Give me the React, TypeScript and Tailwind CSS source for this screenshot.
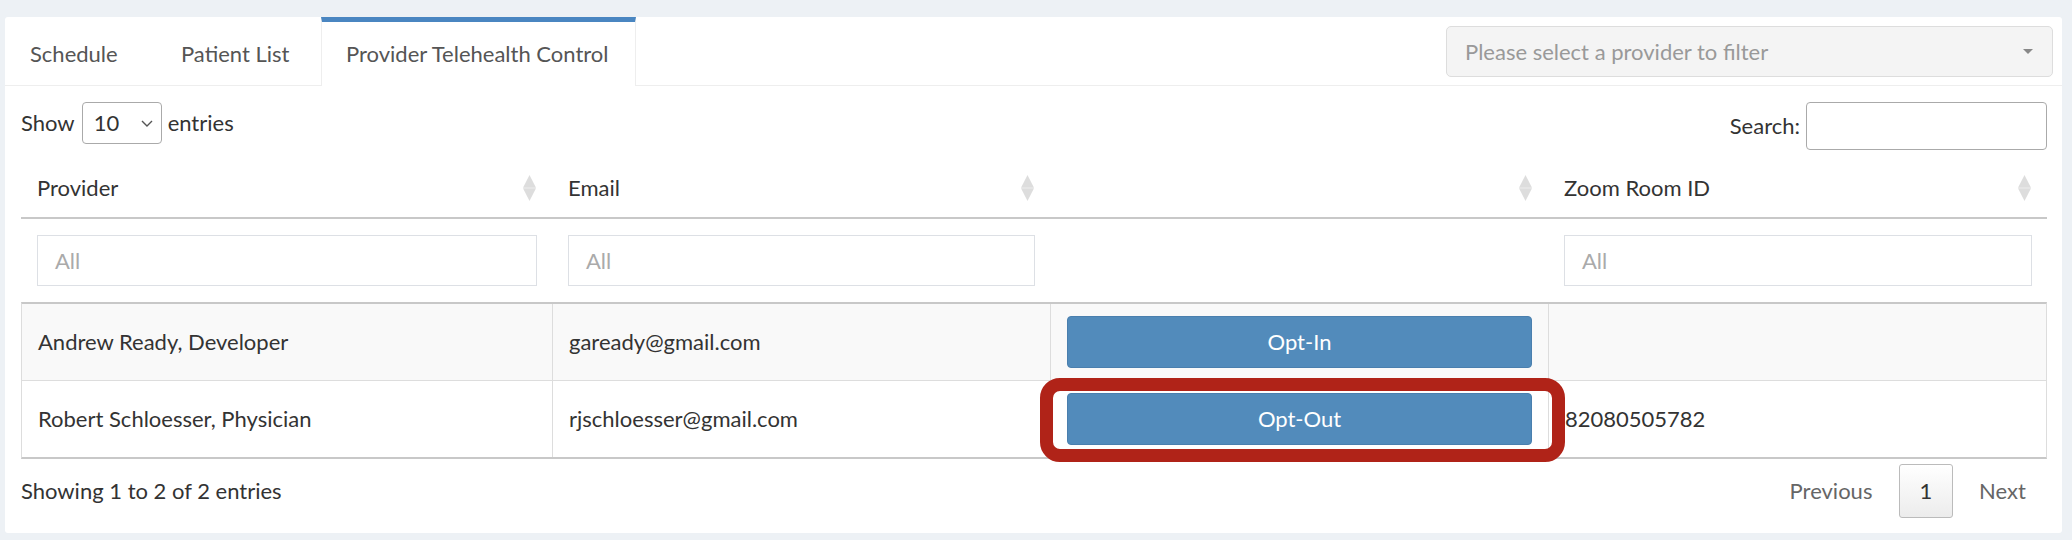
import React from "react";

const providers = [
  { name: "Andrew Ready, Developer", email: "gaready@gmail.com", action: "Opt-In", room: "" },
  { name: "Robert Schloesser, Physician", email: "rjschloesser@gmail.com", action: "Opt-Out", room: "82080505782" },
];

function SortIcon() {
  return (
    <svg width="13" height="26" viewBox="0 0 13 26" className="shrink-0">
      <path d="M6.5 0 L13 12.7 L0 12.7 Z" fill="#dddddd" />
      <path d="M0 13.3 L13 13.3 L6.5 26 Z" fill="#dddddd" />
    </svg>
  );
}

function FilterInput() {
  return (
    <div className="ml-4 mr-[15px] flex h-[51px] items-center border border-[#dde0e5] bg-white pl-[17px] text-[#aaaaaa]">
      All
    </div>
  );
}

export default function App() {
  return (
    <div className="h-[540px] w-[2072px] bg-[#edf1f5] pb-[7px] pl-[5px] pr-[10px] pt-[17px] font-['Lato','Liberation_Sans',sans-serif] text-[22px] leading-none text-[#333333]">
      <div className="flex h-[516px] flex-col rounded-[3px] bg-white">
        {/* Tabs */}
        <div className="flex h-[69px] items-stretch justify-between border-b border-[#eeeeee]">
          <div className="flex items-stretch text-[#555555]">
            <div className="flex w-[152px] items-center border-t-[5px] border-transparent pl-[25px]">Schedule</div>
            <div className="flex w-[164px] items-center border-t-[5px] border-transparent pl-[24px]">Patient List</div>
            <div className="-mb-px flex w-[315px] items-center border-x border-t-[5px] border-x-[#eeeeee] border-t-[#4a86c1] bg-white pl-[24px]">
              Provider Telehealth Control
            </div>
          </div>
          <div className="mr-[9px] mt-[9px] flex h-[51px] w-[607px] items-center justify-between whitespace-nowrap rounded-[5px] border border-[#dddddd] bg-[#f4f4f4] pl-[18px] pr-[19px] text-[#999999]">
            <span>Please select a provider to filter</span>
            <svg width="10" height="5" viewBox="0 0 10 5">
              <path d="M0 0 L10 0 L5 5 Z" fill="#888888" />
            </svg>
          </div>
        </div>

        <div className="flex flex-col pl-4 pr-[15px]">
          {/* Controls */}
          <div className="mt-4 flex h-[48px] items-start justify-between">
            <div className="flex h-[42px] items-center">
              <span>Show</span>
              <div className="ml-[7px] mr-[6px] flex h-[42px] w-[80px] items-center justify-between rounded-[4px] border border-[#aaaaaa] pl-[11px] pr-[8px]">
                <span>10</span>
                <svg width="12" height="7" viewBox="0 0 12 7">
                  <path d="M1 1 L6 6 L11 1" fill="none" stroke="#555555" strokeWidth="1.4" />
                </svg>
              </div>
              <span>entries</span>
            </div>
            <div className="flex h-[48px] items-center">
              <span>Search:</span>
              <div className="ml-[6px] h-[48px] w-[241px] rounded-[4px] border border-[#aaaaaa]" />
            </div>
          </div>

          {/* Header */}
          <div className="mt-2 grid h-[61px] grid-cols-[531px_498px_498px_499px] border-b-2 border-[#c8c8c8]">
            {["Provider", "Email", "", "Zoom Room ID"].map((h, i) => (
              <div key={i} className="flex items-center justify-between pl-4 pr-4">
                <span>{h}</span>
                <SortIcon />
              </div>
            ))}
          </div>

          {/* Filters */}
          <div className="grid h-[83px] grid-cols-[531px_498px_498px_499px] items-center">
            <FilterInput />
            <FilterInput />
            <div />
            <FilterInput />
          </div>

          {/* Body */}
          <div className="border-x border-y-2 border-x-[#dddddd] border-y-[#c8c8c8]">
            {providers.map((p, i) => (
              <div
                key={p.email}
                className={`grid grid-cols-[531px_498px_498px_497px] ${i === 0 ? "h-[77px] border-b border-[#dddddd] bg-[#f9f9f9]" : "h-[76px] bg-white"}`}
              >
                <div className="flex items-center border-r border-[#dddddd] pl-4">{p.name}</div>
                <div className="flex items-center border-r border-[#dddddd] pl-4">{p.email}</div>
                <div className="relative flex items-center border-r border-[#dddddd] px-4">
                  <button className="flex h-[52px] w-full items-center justify-center rounded-[4px] border border-[#4a7fae] bg-[#528bbb] text-white">
                    {p.action}
                  </button>
                  {p.action === "Opt-Out" && (
                    <div className="pointer-events-none absolute -bottom-[5px] -left-[11px] -right-[17px] -top-[3px] rounded-[20px] border-[13px] border-[#b02318]" />
                  )}
                </div>
                <div className="flex items-center pl-4">{p.room}</div>
              </div>
            ))}
          </div>

          {/* Footer */}
          <div className="mt-[5px] flex h-[54px] items-center justify-between">
            <span>Showing 1 to 2 of 2 entries</span>
            <div className="flex h-[54px] items-stretch">
              <div className="flex w-[126px] items-center justify-center text-[#666666]">Previous</div>
              <div className="ml-[5px] flex w-[54px] items-center justify-center rounded-[3px] border border-[#bbbbbb] bg-gradient-to-b from-white to-[#ececec] text-[#333333]">
                1
              </div>
              <div className="ml-[5px] flex w-[89px] items-center justify-center text-[#666666]">Next</div>
            </div>
          </div>
        </div>
      </div>
    </div>
  );
}
